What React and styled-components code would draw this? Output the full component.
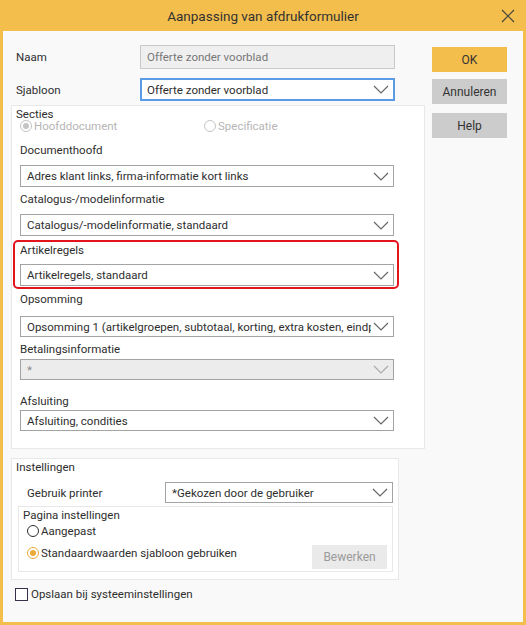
import React from 'react';
import styled, { createGlobalStyle } from 'styled-components';

const Global = createGlobalStyle`
  html, body { margin: 0; padding: 0; background: #ffffff; }
  body { font-family: Roboto, "Noto Sans", sans-serif; font-size: 11.5px; line-height: 16px; color: #2e2e2e; }
  * { box-sizing: border-box; }
`;

const ORANGE = '#f4be4c';

const Window = styled.div`
  width: 526px;
  height: 625px;
  border: 3px solid ${ORANGE};
  border-top: none;
  background: #f9f9f9;
  display: flex;
  flex-direction: column;
`;

const TitleBar = styled.div`
  height: 31px;
  margin: 0 -3px;
  background: ${ORANGE};
  display: flex;
  align-items: center;
  justify-content: center;
  position: relative;
  font-size: 13.5px;
  color: #333;
`;

const Close = styled.button`
  position: absolute;
  right: 10px;
  top: 8px;
  width: 16px;
  height: 16px;
  padding: 0;
  border: none;
  background: transparent;
  display: flex;
`;

const Body = styled.div`
  display: flex;
  padding: 14px 16px 0 8px;
`;

const LeftCol = styled.div`
  width: 414px;
  display: flex;
  flex-direction: column;
`;

const RightCol = styled.div`
  margin-left: 7px;
  width: 75px;
  padding-top: 2px;
  display: flex;
  flex-direction: column;
`;

const Button = styled.button`
  width: 75px;
  height: 25px;
  border: none;
  background: ${p => (p.$primary ? ORANGE : '#cccccc')};
  color: #333;
  font-family: inherit;
  font-size: 12px;
  margin-top: ${p => p.$gap || 0}px;
  padding: 0;
`;

const TopRow = styled.div`
  display: flex;
  align-items: center;
  margin-top: ${p => p.$gap || 0}px;
`;

const TopLabel = styled.div`
  width: 129px;
  padding-left: 5px;
`;

const TextInput = styled.div`
  width: 255px;
  height: 24px;
  border: 1px solid #c9c9c9;
  background: #efefef;
  color: #777;
  padding-left: 6px;
  display: flex;
  align-items: center;
`;

const Select = styled.div`
  width: ${p => p.$w || 374}px;
  height: ${p => p.$h || 22}px;
  border: ${p => (p.$focus ? '2px solid #5b9be6' : '1px solid #a3a3a3')};
  background: ${p => (p.$disabled ? '#ececec' : '#ffffff')};
  color: ${p => (p.$disabled ? '#888' : '#2e2e2e')};
  display: flex;
  align-items: center;
  padding: 0 4px 0 ${p => (p.$focus ? 5 : 6)}px;
`;

const SelectText = styled.span`
  flex: 1;
  white-space: nowrap;
  overflow: hidden;
`;

const Chevron = ({ color = '#666' }) => (
  <svg width="16" height="9" viewBox="0 0 16 9" style={{ flex: 'none', marginLeft: 2 }}>
    <path d="M1 1 L8 8 L15 1" fill="none" stroke={color} strokeWidth="1.2" />
  </svg>
);

const Panel = styled.div`
  background: #ffffff;
  border: 1px solid #e8e8e8;
  margin-top: ${p => p.$gap || 0}px;
  width: ${p => p.$w || 414}px;
`;

const SectiesPanel = styled(Panel)`
  padding: 0 0 17px 2px;
`;

const PanelTitle = styled.div`
  line-height: 16px;
  padding-left: 2px;
`;

const RadioRow = styled.div`
  display: flex;
  height: 14px;
  margin-top: -3px;
  padding-left: 6px;
  margin-bottom: 9px;
`;

const RadioItem = styled.label`
  display: flex;
  align-items: center;
  gap: 2px;
  color: ${p => (p.$disabled ? '#b5b5b5' : '#2e2e2e')};
  width: ${p => p.$w || 'auto'};
`;

const Circle = styled.span`
  width: 12px;
  height: 12px;
  border-radius: 50%;
  border: 1px solid ${p => p.$c};
  display: flex;
  align-items: center;
  justify-content: center;
  background: #fff;
  &::after {
    content: '';
    display: ${p => (p.$on ? 'block' : 'none')};
    width: 6px;
    height: 6px;
    border-radius: 50%;
    background: ${p => p.$c};
  }
`;

const Radio = ({ on, color, children, disabled, w }) => (
  <RadioItem $disabled={disabled} $w={w}>
    <Circle $on={on} $c={color} />
    {children}
  </RadioItem>
);

const Field = styled.div`
  padding: 0 0 0 6px;
  margin-bottom: ${p => p.$mb ?? 4}px;
`;

const FieldLabel = styled.div`
  line-height: 16px;
  margin-bottom: ${p => p.$mb ?? 7}px;
`;

const Highlight = styled.div`
  border: 2px solid #e3141c;
  border-radius: 5px;
  margin: 0 25px 2px -1px;
  padding: 0 3px 1px 5px;
`;

const Settings = styled(Panel)`
  padding: 0 0 7px 2px;
`;

const PrinterRow = styled.div`
  display: flex;
  align-items: center;
  margin-top: 7px;
  height: 21px;
`;

const PrinterLabel = styled.div`
  width: 151px;
  padding-left: 13px;
`;

const SubPanel = styled.div`
  border: 1px solid #e8e8e8;
  margin: 3px 5px 0 4px;
  padding: 0 0 2px 2px;
  height: 66px;
`;

const SubRow = styled.div`
  display: flex;
  align-items: flex-start;
  justify-content: space-between;
  padding-left: 6px;
  padding-right: 5px;
  margin-top: ${p => p.$gap || 0}px;
`;

const GrayButton = styled.button`
  width: 75px;
  height: 24px;
  border: none;
  background: #eaeaea;
  color: #9a9a9a;
  font-family: inherit;
  font-size: 12px;
  padding: 0;
`;

const CheckRow = styled.label`
  display: flex;
  align-items: center;
  gap: 3px;
  margin: 6px 0 0 4px;
`;

const Box = styled.span`
  width: 13px;
  height: 13px;
  border: 1px solid #3a2f4a;
  background: #fff;
`;

const sections = [
  { label: 'Documenthoofd', value: 'Adres klant links, firma-informatie kort links' },
  { label: 'Catalogus-/modelinformatie', value: 'Catalogus/-modelinformatie, standaard' },
];

export default function App() {
  return (
    <>
      <Global />
      <Window>
        <TitleBar>
          Aanpassing van afdrukformulier
          <Close aria-label="Sluiten">
            <svg width="16" height="16" viewBox="0 0 16 16">
              <path d="M2 2 L14 14 M14 2 L2 14" stroke="#444" strokeWidth="1.2" />
            </svg>
          </Close>
        </TitleBar>
        <Body>
          <LeftCol>
            <TopRow>
              <TopLabel>Naam</TopLabel>
              <TextInput>Offerte zonder voorblad</TextInput>
            </TopRow>
            <TopRow $gap={9}>
              <TopLabel>Sjabloon</TopLabel>
              <Select $w={255} $h={23} $focus>
                <SelectText>Offerte zonder voorblad</SelectText>
                <Chevron />
              </Select>
            </TopRow>

            <SectiesPanel $gap={4}>
              <PanelTitle>Secties</PanelTitle>
              <RadioRow>
                <Radio on disabled color="#c4c4c4" w="184px">Hoofddocument</Radio>
                <Radio disabled color="#c4c4c4">Specificatie</Radio>
              </RadioRow>
              {sections.map(s => (
                <Field key={s.label}>
                  <FieldLabel>{s.label}</FieldLabel>
                  <Select>
                    <SelectText>{s.value}</SelectText>
                    <Chevron />
                  </Select>
                </Field>
              ))}
              <Highlight>
                <FieldLabel $mb={6}>Artikelregels</FieldLabel>
                <Select>
                  <SelectText>Artikelregels, standaard</SelectText>
                  <Chevron />
                </Select>
              </Highlight>
              <Field $mb={4}>
                <FieldLabel $mb={9}>Opsomming</FieldLabel>
                <Select $h={21}>
                  <SelectText>Opsomming 1 (artikelgroepen, subtotaal, korting, extra kosten, eindprijs)</SelectText>
                  <Chevron />
                </Select>
              </Field>
              <Field $mb={13}>
                <FieldLabel $mb={2}>Betalingsinformatie</FieldLabel>
                <Select $disabled $h={21}>
                  <SelectText>*</SelectText>
                  <Chevron color="#aaa" />
                </Select>
              </Field>
              <Field $mb={0}>
                <FieldLabel $mb={1}>Afsluiting</FieldLabel>
                <Select $h={21}>
                  <SelectText>Afsluiting, condities</SelectText>
                  <Chevron />
                </Select>
              </Field>
            </SectiesPanel>

            <Settings $gap={9} $w={388}>
              <PanelTitle>Instellingen</PanelTitle>
              <PrinterRow>
                <PrinterLabel>Gebruik printer</PrinterLabel>
                <Select $w={228} $h={21}>
                  <SelectText>*Gekozen door de gebruiker</SelectText>
                  <Chevron />
                </Select>
              </PrinterRow>
              <SubPanel>
                <PanelTitle>Pagina instellingen</PanelTitle>
                <SubRow>
                  <Radio color="#2e2e2e">Aangepast</Radio>
                </SubRow>
                <SubRow $gap={6}>
                  <Radio on color="#eba93c">Standaardwaarden sjabloon gebruiken</Radio>
                  <GrayButton>Bewerken</GrayButton>
                </SubRow>
              </SubPanel>
            </Settings>

            <CheckRow>
              <Box />
              Opslaan bij systeeminstellingen
            </CheckRow>
          </LeftCol>
          <RightCol>
            <Button $primary>OK</Button>
            <Button $gap={7}>Annuleren</Button>
            <Button $gap={9}>Help</Button>
          </RightCol>
        </Body>
      </Window>
    </>
  );
}
